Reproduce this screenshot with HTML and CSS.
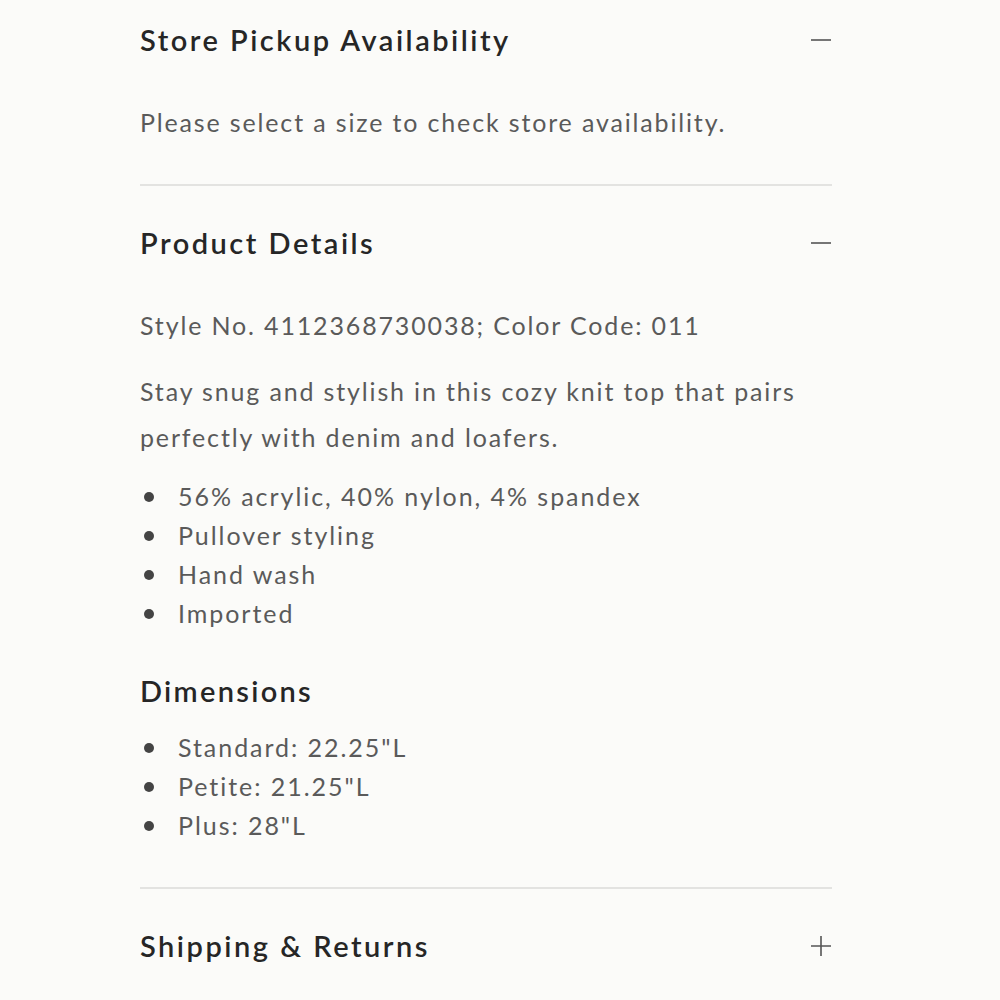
FILE: index.html
```html
<!DOCTYPE html>
<html lang="en">
<head>
<meta charset="utf-8">
<title>Product accordion</title>
<link rel="stylesheet" href="styles.css">
</head>
<body>
<div class="accordion">
  <section class="section first">
    <div class="header">
      <h2 class="title">Store Pickup Availability</h2>
      <svg class="icon" width="22" height="22" viewBox="0 0 22 22"><path d="M1 11H21" stroke="#555" stroke-width="1.6" fill="none"/></svg>
    </div>
    <div class="content">
      <p class="text">Please select a size to check store availability.</p>
    </div>
  </section>
  <section class="section">
    <div class="header">
      <h2 class="title">Product Details</h2>
      <svg class="icon" width="22" height="22" viewBox="0 0 22 22"><path d="M1 11H21" stroke="#555" stroke-width="1.6" fill="none"/></svg>
    </div>
    <div class="content">
      <p class="text">Style No. 4112368730038; Color Code: 011</p>
      <p class="text para">Stay snug and stylish in this cozy knit top that pairs perfectly with denim and loafers.</p>
      <ul class="list">
        <li>56% acrylic, 40% nylon, 4% spandex</li>
        <li>Pullover styling</li>
        <li>Hand wash</li>
        <li>Imported</li>
      </ul>
      <h3 class="subtitle">Dimensions</h3>
      <ul class="list">
        <li>Standard: 22.25"L</li>
        <li>Petite: 21.25"L</li>
        <li>Plus: 28"L</li>
      </ul>
    </div>
  </section>
  <section class="section">
    <div class="header">
      <h2 class="title">Shipping &amp; Returns</h2>
      <svg class="icon" width="22" height="22" viewBox="0 0 22 22"><path d="M1 11H21M11 1V21" stroke="#555" stroke-width="1.6" fill="none"/></svg>
    </div>
  </section>
</div>
</body>
</html>
```
FILE: styles.css
```css
html, body {
  margin: 0;
  padding: 0;
  background: #fbfbf9;
}
body {
  font-family: "Lato", "Open Sans", sans-serif;
  color: #5a5a5a;
}
.accordion {
  width: 692px;
  margin-left: 140px;
}
.section {
  border-top: 2px solid #e3e3e1;
}
.section.first {
  border-top: none;
}
.header {
  display: flex;
  justify-content: space-between;
  align-items: center;
  padding: 37px 0 21px;
}
.first .header {
  padding-top: 20px;
}
.title {
  margin: 0;
  font-size: 29px;
  line-height: 40px;
  font-weight: 600;
  letter-spacing: 2.5px;
  color: #262626;
}
.icon {
  display: block;
}
.content {
  padding: 21px 0 42px;
}
.text {
  margin: 0;
  font-size: 25px;
  line-height: 40px;
  letter-spacing: 1.85px;
}
.para {
  margin-top: 23px;
  line-height: 46px;
}
.list {
  margin: 17px 0 0;
  padding: 0;
  list-style: none;
}
.list li {
  position: relative;
  padding-left: 38px;
  font-size: 25px;
  line-height: 39px;
  letter-spacing: 1.95px;
}
.list li::before {
  content: "";
  position: absolute;
  left: 4px;
  top: 15px;
  width: 10px;
  height: 10px;
  border-radius: 50%;
  background: #444;
}
.subtitle {
  margin: 38px 0 0;
  font-size: 29px;
  line-height: 40px;
  font-weight: 600;
  letter-spacing: 2.3px;
  color: #262626;
}
```
